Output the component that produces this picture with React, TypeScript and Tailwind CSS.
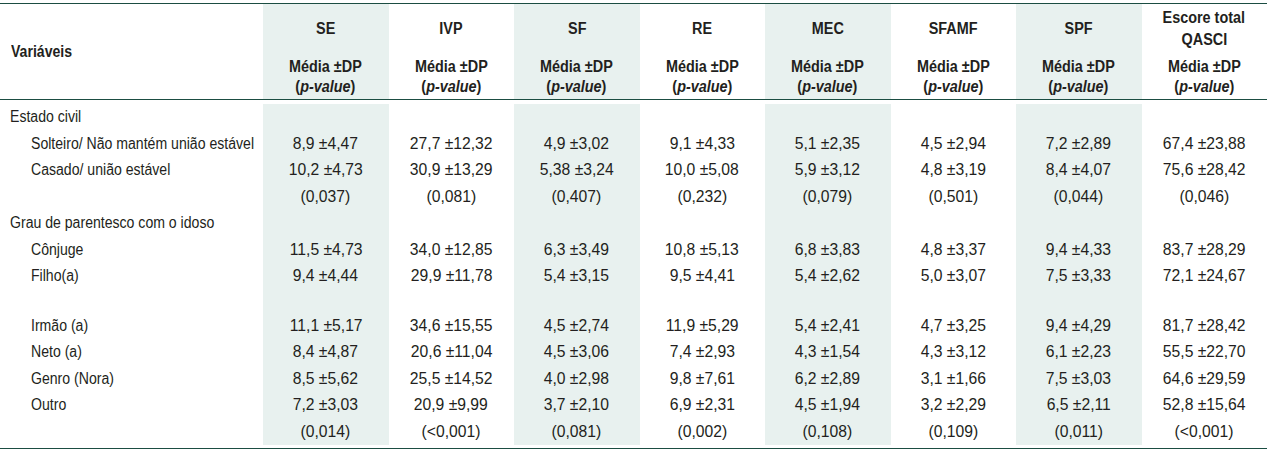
import React from "react";

const FONT = "font-['Liberation_Sans','Arial',sans-serif]";

const heads: string[][] = [
  ["SE"],
  ["IVP"],
  ["SF"],
  ["RE"],
  ["MEC"],
  ["SFAMF"],
  ["SPF"],
  ["Escore total", "QASCI"],
];

type Row = { label?: string; indent?: boolean; vals?: string[]; spacer?: boolean };

const rows: Row[] = [
  { label: "Estado civil" },
  {
    label: "Solteiro/ Não mantém união estável",
    indent: true,
    vals: ["8,9 ±4,47", "27,7 ±12,32", "4,9 ±3,02", "9,1 ±4,33", "5,1 ±2,35", "4,5 ±2,94", "7,2 ±2,89", "67,4 ±23,88"],
  },
  {
    label: "Casado/ união estável",
    indent: true,
    vals: ["10,2 ±4,73", "30,9 ±13,29", "5,38 ±3,24", "10,0 ±5,08", "5,9 ±3,12", "4,8 ±3,19", "8,4 ±4,07", "75,6 ±28,42"],
  },
  { vals: ["(0,037)", "(0,081)", "(0,407)", "(0,232)", "(0,079)", "(0,501)", "(0,044)", "(0,046)"] },
  { label: "Grau de parentesco com o idoso" },
  {
    label: "Cônjuge",
    indent: true,
    vals: ["11,5 ±4,73", "34,0 ±12,85", "6,3 ±3,49", "10,8 ±5,13", "6,8 ±3,83", "4,8 ±3,37", "9,4 ±4,33", "83,7 ±28,29"],
  },
  {
    label: "Filho(a)",
    indent: true,
    vals: ["9,4 ±4,44", "29,9 ±11,78", "5,4 ±3,15", "9,5 ±4,41", "5,4 ±2,62", "5,0 ±3,07", "7,5 ±3,33", "72,1 ±24,67"],
  },
  { spacer: true },
  {
    label: "Irmão (a)",
    indent: true,
    vals: ["11,1 ±5,17", "34,6 ±15,55", "4,5 ±2,74", "11,9 ±5,29", "5,4 ±2,41", "4,7 ±3,25", "9,4 ±4,29", "81,7 ±28,42"],
  },
  {
    label: "Neto (a)",
    indent: true,
    vals: ["8,4 ±4,87", "20,6 ±11,04", "4,5 ±3,06", "7,4 ±2,93", "4,3 ±1,54", "4,3 ±3,12", "6,1 ±2,23", "55,5 ±22,70"],
  },
  {
    label: "Genro (Nora)",
    indent: true,
    vals: ["8,5 ±5,62", "25,5 ±14,52", "4,0 ±2,98", "9,8 ±7,61", "6,2 ±2,89", "3,1 ±1,66", "7,5 ±3,03", "64,6 ±29,59"],
  },
  {
    label: "Outro",
    indent: true,
    vals: ["7,2 ±3,03", "20,9 ±9,99", "3,7 ±2,10", "6,9 ±2,31", "4,5 ±1,94", "3,2 ±2,29", "6,5 ±2,11", "52,8 ±15,64"],
  },
  { vals: ["(0,014)", "(<0,001)", "(0,081)", "(0,002)", "(0,108)", "(0,109)", "(0,011)", "(<0,001)"] },
];

const shade = (i: number) => (i % 2 === 0 ? "bg-[#e8f1ef]" : "bg-white");

function T({ children }: { children: React.ReactNode }) {
  return <span className="inline-block whitespace-nowrap scale-x-[0.88] origin-left">{children}</span>;
}

function H({ children }: { children: React.ReactNode }) {
  return <span className="inline-block whitespace-nowrap scale-x-[0.9] origin-center">{children}</span>;
}

function N({ children }: { children: React.ReactNode }) {
  return <span className="inline-block whitespace-nowrap scale-x-[0.98] origin-center">{children}</span>;
}

export default function App() {
  return (
    <div className={`w-[1277px] h-[455px] bg-white pt-[3px] text-[#231f20] ${FONT} text-[16px]`}>
      <div className="w-[1267px] border-t border-b border-[#1b4d42]">
        {/* Header */}
        <div className="grid grid-cols-[263px_repeat(8,minmax(0,1fr))] h-[96px] border-b border-[#1b4d42]">
          <div className="flex items-center pl-[11px] font-bold pt-[1px]">
            <T>Variáveis</T>
          </div>
          {heads.map((h, i) => (
            <div key={i} className={`flex flex-col font-bold ${shade(i)}`}>
              <div className="h-[47px] flex flex-col items-center justify-center leading-[22px] pt-[2px]">
                {h.map((t) => (
                  <H key={t}>{t}</H>
                ))}
              </div>
              <div className="flex flex-col items-center leading-[20px] pt-[6px]">
                <H>Média ±DP</H>
                <H>
                  (<i className="font-bold italic">p-value</i>)
                </H>
              </div>
            </div>
          ))}
        </div>
        {/* Body */}
        <div className="pt-[4px] pb-[3px] grid grid-cols-[263px_repeat(8,minmax(0,1fr))]">
          {rows.map((r, ri) => (
            <React.Fragment key={ri}>
              <div
                className={`${r.spacer ? "h-[23px]" : "h-[26.5px]"} flex items-center ${
                  r.indent ? "pl-[31px]" : "pl-[10px]"
                }`}
              >
                {r.label ? <T>{r.label}</T> : null}
              </div>
              {Array.from({ length: 8 }).map((_, ci) => (
                <div
                  key={ci}
                  className={`${r.spacer ? "h-[23px]" : "h-[26.5px]"} flex items-center justify-center ${shade(ci)}`}
                >
                  {r.vals ? <N>{r.vals[ci]}</N> : null}
                </div>
              ))}
            </React.Fragment>
          ))}
        </div>
      </div>
    </div>
  );
}
